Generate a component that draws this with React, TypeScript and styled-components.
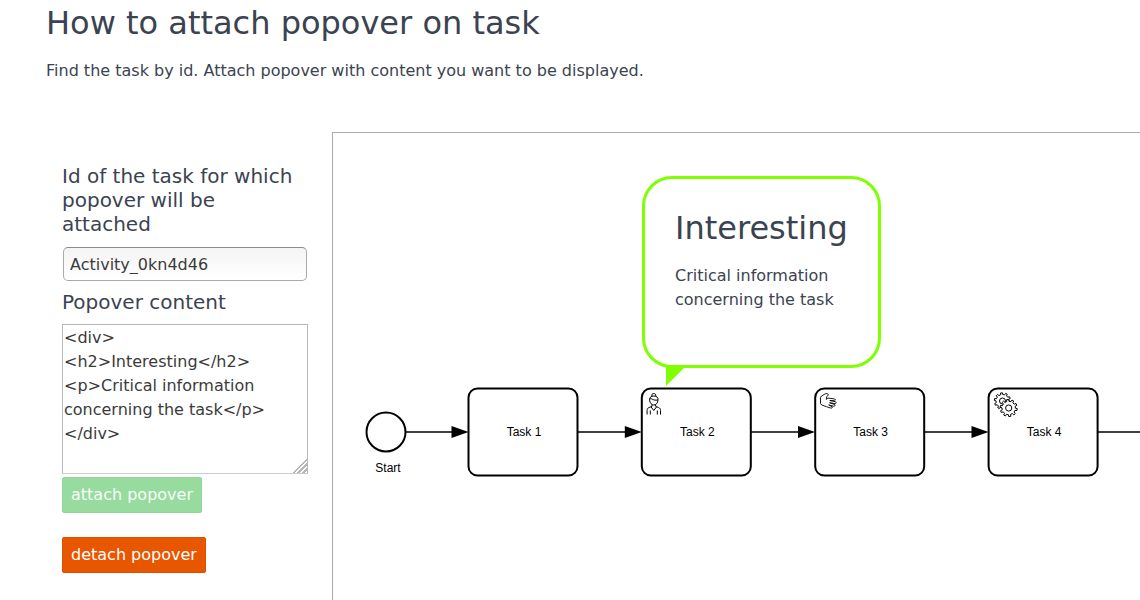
import React, { useState } from "react";
import styled, { createGlobalStyle } from "styled-components";

const GlobalStyle = createGlobalStyle`
  *, *::before, *::after { box-sizing: border-box; }
  body {
    margin: 0;
    background: #fff;
    color: #3b4351;
    font-family: "DejaVu Sans", sans-serif;
    font-size: 16px;
    line-height: 24px;
  }
`;

const Page = styled.div`
  display: flex;
  flex-direction: column;
  min-height: 100vh;
  padding: 4px 0 0 46px;
  overflow: hidden;
`;

const Header = styled.header`
  padding-bottom: 49px;
`;

const Title = styled.h2`
  margin: 0 0 17px;
  font-size: 32px;
  font-weight: 400;
  line-height: 38px;
`;

const Paragraph = styled.p`
  margin: 0;
`;

const Main = styled.main`
  flex: 1;
  display: flex;
`;

const Sidebar = styled.form`
  flex: 0 0 286px;
  display: flex;
  flex-direction: column;
  align-items: flex-start;
  padding: 32px 24px 24px 16px;
`;

const Label = styled.label`
  font-size: 20px;
  line-height: 24px;
  margin-bottom: 10px;
`;

const IdInput = styled.input`
  align-self: stretch;
  height: 34px;
  margin: 1px 1px 9px;
  padding: 0 6px;
  border: 1px solid #aaa;
  border-top-color: #8c8c8c;
  border-radius: 5px;
  background: linear-gradient(#f4f4f4, #fff);
  color: #3b3b3b;
  font: inherit;
`;

const ContentArea = styled.textarea`
  align-self: stretch;
  height: 150px;
  margin: 0 0 3px;
  padding: 1px;
  border: 1px solid #b8b8b8;
  border-bottom-color: #ccc;
  background: #fff;
  color: #3b3b3b;
  font: inherit;
  resize: both;
  overflow: auto;

  &::-webkit-resizer {
    background: linear-gradient(
      135deg,
      transparent 50%, #b4b4b4 50%, #b4b4b4 59%,
      transparent 59%, transparent 66%, #b4b4b4 66%, #b4b4b4 75%,
      transparent 75%, transparent 82%, #b4b4b4 82%, #b4b4b4 91%,
      transparent 91%
    );
  }
`;

const Button = styled.button<{ $tone: "success" | "error" }>`
  height: 36px;
  margin-bottom: 24px;
  padding: 0 8px;
  border: 1px solid ${(p) => (p.$tone === "success" ? "#8fd79a" : "#d95000")};
  border-radius: 2px;
  background: ${(p) => (p.$tone === "success" ? "#98db9f" : "#e85600")};
  color: ${(p) => (p.$tone === "success" ? "#f7fcf8" : "#fff")};
  font: inherit;
  white-space: nowrap;
`;

const Canvas = styled.section`
  position: relative;
  flex: 1;
  min-width: 0;
  overflow: hidden;
  border-top: 1px solid #aaa;
  border-left: 1px solid #aaa;
`;

const Diagram = styled.svg`
  display: block;
  font-family: "Liberation Sans", Arial, sans-serif;
  font-size: 12px;
`;

const Popover = styled.div`
  position: absolute;
  left: 309px;
  top: 43px;
  width: 239px;
  padding: 30px 30px 53px;
  border: 3px solid #7fff00;
  border-radius: 30px;
  background: #fff;
`;

const Tail = styled.svg`
  position: absolute;
  left: 21px;
  top: 100%;
`;

const gear = (cx: number, cy: number, outer: number, inner: number, teeth: number) => {
  const step = (Math.PI * 2) / teeth;
  const points: string[] = [];
  for (let i = 0; i < teeth; i++) {
    const marks: [number, number][] = [
      [-0.27, inner],
      [-0.18, outer],
      [0.18, outer],
      [0.27, inner],
    ];
    marks.forEach(([offset, r]) => {
      const a = (i + 0.3 + offset) * step;
      points.push(`${(cx + r * Math.cos(a)).toFixed(2)} ${(cy + r * Math.sin(a)).toFixed(2)}`);
    });
  }
  return `M${points.join("L")}Z`;
};

const UserIcon = () => (
  <g fill="none" stroke="#000" strokeWidth="1" strokeLinejoin="round">
    <path d="M5.700 3.200C5 1.500 6.200.5 7.500.5s2.400 1 1.900 2.700" />
    <path d="M3.300 7.200C3 4.500 4.600 3 7.500 3s4.500 1.500 4.200 4.200C11.500 10 9.500 12 7.500 12S3.500 10 3.300 7.200Z" />
    <path d="M3.400 5.800C5 5.200 6 6.400 7.500 6.900s2.800.2 4.100.1" />
    <path d="M5.700 11.500v1.800L2.800 14.500C1.300 15 .8 16 .8 17.500V21.500M9.300 11.500v1.800l2.900 1.200c1.500.5 2 1.500 2 3V21.500M4 17.500v4M11 17.500v4M4.800 14l2.700 3.500L10.200 14" />
  </g>
);

const HandIcon = () => (
  <path
    d="M8.800 1.700 7.400.6 5.800.7 1.800 3 .8 4.600V10.600L2 12l4.800 1.700 4.600 1.500 1.300-.6-.4-1-3.300-1.700 5.200 1.400 1.300-.8-.6-1-5-1.800 5.600 1 1.100-.9-.8-1.100-5.700-1.200 4.700.3 1-.8-.9-1.100-6.700-.8L6.500 6.400l.6-2.700L8.800 1.700Z"
    fill="none"
    stroke="#000"
    strokeWidth="0.900"
    strokeLinejoin="round"
  />
);

const GearsIcon = () => (
  <g fill="#fff" stroke="#000" strokeWidth="1" strokeLinejoin="round">
    <path d={gear(9.400, 8, 8.200, 6.500, 10)} />
    <circle cx="9.400" cy="8" r="3" />
    <path d={gear(15.600, 15, 8.600, 6.700, 10)} />
    <circle cx="15.600" cy="15" r="3.100" />
  </g>
);

type TaskProps = { x: number; name: string; children?: React.ReactNode };

const Task = ({ x, name, children }: TaskProps) => (
  <g transform={`translate(${x} 255.500)`}>
    <rect width="109" height="87" rx="9" fill="#fff" stroke="#000" strokeWidth="2" />
    {children && <g transform="translate(4.500 4.500)">{children}</g>}
    <text x="55.500" y="47.500" textAnchor="middle">{name}</text>
  </g>
);

const Flow = ({ from, to }: { from: number; to: number }) => (
  <g>
    <path d={`M${from} 299H${to - 10}`} stroke="#000" strokeWidth="1.500" />
    <path d={`M${to} 299l-17-6v12Z`} />
  </g>
);

export default function App() {
  const [taskId, setTaskId] = useState("Activity_0kn4d46");
  const [content, setContent] = useState(
    "<div>\n<h2>Interesting</h2>\n<p>Critical information concerning the task</p>\n</div>"
  );

  return (
    <>
      <GlobalStyle />
      <Page>
        <Header>
          <Title>How to attach popover on task</Title>
          <Paragraph>
            Find the task by id. Attach popover with content you want to be displayed.
          </Paragraph>
        </Header>
        <Main>
          <Sidebar onSubmit={(e) => e.preventDefault()}>
            <Label htmlFor="task-id">Id of the task for which popover will be attached</Label>
            <IdInput id="task-id" value={taskId} onChange={(e) => setTaskId(e.target.value)} />
            <Label htmlFor="popover-content">Popover content</Label>
            <ContentArea
              id="popover-content"
              spellCheck={false}
              value={content}
              onChange={(e) => setContent(e.target.value)}
            />
            <Button type="button" $tone="success">attach popover</Button>
            <Button type="button" $tone="error">detach popover</Button>
          </Sidebar>
          <Canvas>
            <Diagram width="1000" height="440">
              <Flow from={73} to={135.5} />
              <Flow from={244} to={308.8} />
              <Flow from={418} to={482} />
              <Flow from={591} to={655.5} />
              <Flow from={764} to={829} />
              <circle cx="53" cy="299" r="19.500" fill="#fff" stroke="#000" strokeWidth="2" />
              <text x="55" y="339" textAnchor="middle">Start</text>
              <Task x={135.5} name="Task 1" />
              <Task x={308.8} name="Task 2"><UserIcon /></Task>
              <Task x={482.2} name="Task 3"><HandIcon /></Task>
              <Task x={655.6} name="Task 4"><GearsIcon /></Task>
            </Diagram>
            <Popover>
              <Title>Interesting</Title>
              <Paragraph>Critical information concerning the task</Paragraph>
              <Tail width="22" height="22" aria-hidden="true">
                <path d="M0 0H21L0 21Z" fill="#7fff00" />
              </Tail>
            </Popover>
          </Canvas>
        </Main>
      </Page>
    </>
  );
}
